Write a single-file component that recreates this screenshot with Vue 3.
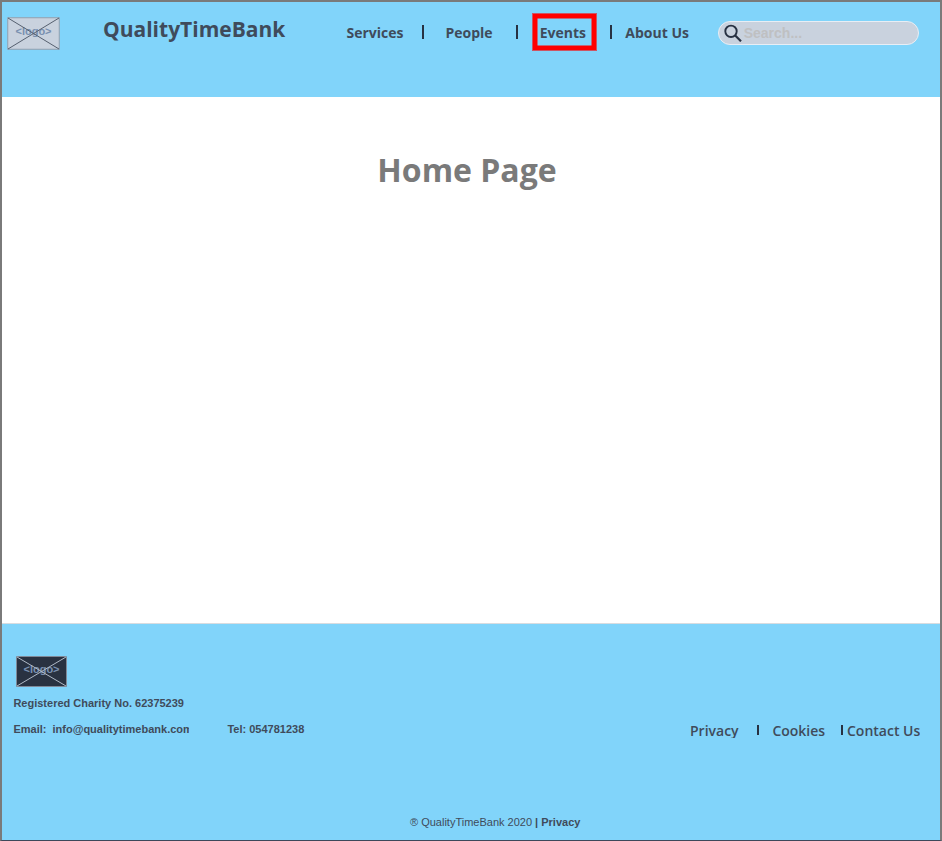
<script setup>
const navigation = [
  { label: 'Services', key: 'services' },
  { label: 'People', key: 'people' },
  { label: 'Events', key: 'events', active: true },
  { label: 'About Us', key: 'about' },
]
const footerLinks = [
  { label: 'Privacy', key: 'privacy' },
  { label: 'Cookies', key: 'cookies' },
  { label: 'Contact Us', key: 'contact' },
]
</script>

<template>
  <div class="page">
    <header class="header">
      <svg class="logo" viewBox="0 0 53 33" width="53" height="33">
        <rect x=".75" y=".75" width="51.5" height="31.5" fill="#c9d2de" stroke="#929eaf" />
        <text x="26.5" y="17.5" text-anchor="middle" class="logo-text">&lt;logo&gt;</text>
        <path d="M1 1L52 32M52 1L1 32" fill="none" stroke="#56606f" stroke-width="1" />
      </svg>
      <div class="brand">QualityTimeBank</div>
      <nav class="nav">
        <template v-for="(item, index) in navigation" :key="item.key">
          <span v-if="index" class="divider"></span>
          <a class="nav-item" :class="[item.key, { active: item.active }]">{{ item.label }}</a>
        </template>
      </nav>
      <div class="search">
        <svg class="search-icon" viewBox="0 0 18 18" width="18" height="18" fill="none" stroke="#273142">
          <circle cx="7" cy="7.3" r="5.7" stroke-width="1.9" />
          <path d="M11 11.3L17 17.3" stroke-width="2.2" />
        </svg>
        <span>Search...</span>
      </div>
    </header>

    <main class="main"><h1>Home Page</h1></main>

    <footer class="footer">
      <svg class="footer-logo" viewBox="0 0 51 31" width="51" height="31">
        <rect x=".5" y=".5" width="50" height="30" rx=".5" fill="#293241" stroke="#7f8998" />
        <text x="25.5" y="16.8" text-anchor="middle" class="logo-text">&lt;logo&gt;</text>
        <path d="M1 1L50 30M50 1L1 30" fill="none" stroke="#b0bac7" stroke-width="1" />
      </svg>
      <div class="charity">Registered Charity No. 62375239</div>
      <div class="footer-row">
        <div class="email">Email:&nbsp; info@qualitytimebank.com</div>
        <div class="phone">Tel: 054781238</div>
        <nav class="footer-nav">
          <template v-for="(item, index) in footerLinks" :key="item.key">
            <span v-if="index" class="footer-divider"></span>
            <a class="footer-link" :class="item.key">{{ item.label }}</a>
          </template>
        </nav>
      </div>
      <div class="copyright">® QualityTimeBank 2020 <b>| Privacy</b></div>
    </footer>
  </div>
</template>

<style>
body { margin: 0; background: #fff; }
</style>

<style scoped>
* { box-sizing: border-box; }
.page {
  width: 942px;
  height: 841px;
  display: flex;
  flex-direction: column;
  overflow: hidden;
  border: 2px solid #7a7a7a;
  border-bottom: 1px solid #3d485a;
  background: #fff;
  color: #3f4b5b;
  font-family: "Liberation Sans", Arial, sans-serif;
}
.header {
  height: 95px;
  display: flex;
  align-items: flex-start;
  flex: none;
  padding-left: 5px;
  background: #81d4fa;
  white-space: nowrap;
}
.logo { flex: none; margin-top: 15px; }
.logo-text { fill: #7990b0; font: bold 11px "Liberation Sans", Arial, sans-serif; }
.brand {
  width: 236px;
  flex: none;
  margin: 13px 0 0 43px;
  font: bold 21px/29px "Open Sans", sans-serif;
}
.nav {
  width: 350px;
  height: 38px;
  flex: none;
  display: flex;
  align-items: center;
  margin-top: 11px;
  font: bold 14px/20px "Open Sans", sans-serif;
}
.nav-item { flex: none; padding-top: 1px; }
.services { width: 83px; padding-left: 7.5px; }
.people { width: 92px; padding-left: 21.5px; }
.events { width: 63px; margin: 0 14px 0 15px; }
.about { padding-left: 13.3px; }
.active {
  height: 36px;
  padding: 5px 0 0 2.7px;
  border: 4px solid #f00;
  box-shadow: 0 0 0 1px rgba(255, 0, 0, .6), inset 0 0 0 .5px #f00;
}
.divider { width: 2px; height: 14px; flex: none; background: #273142; }
.search {
  width: 201px;
  height: 24px;
  flex: none;
  display: flex;
  align-items: center;
  margin: 19px 0 0 29px;
  padding-left: 5px;
  border: 1px solid #e8eef5;
  border-radius: 12px;
  background: #c9d2de;
  color: #bfc0c2;
  font: bold 14px/20px "Liberation Sans", Arial, sans-serif;
}
.search-icon { margin-right: 1.7px; }
.main { height: 526px; flex: none; padding-top: 50px; }
h1 {
  margin: 0;
  padding-right: 8px;
  text-align: center;
  color: #7a7a7a;
  font: bold 32px/46px "Open Sans", sans-serif;
}
.footer {
  height: 217px;
  flex: none;
  border-top: 1px solid #d8dce0;
  background: #81d4fa;
  padding: 32px 11px 0;
  font-size: 11px;
  line-height: 14px;
}
.footer-logo { display: block; margin-left: 3px; }
.charity { margin-top: 9px; padding-left: .4px; font-weight: bold; }
.footer-row { height: 20px; display: flex; margin-top: 12px; white-space: nowrap; }
.email { width: 176px; padding-left: .4px; overflow: hidden; font-weight: bold; }
.phone { width: 77px; margin-left: 38.4px; font-weight: bold; }
.footer-nav {
  display: flex;
  margin-left: 385.6px;
  font: 600 14px/18px "Open Sans", sans-serif;
}
.footer-link { height: 16px; overflow: hidden; }
.privacy { width: 67px; }
.cookies { width: 68.6px; margin-left: 13.4px; }
.contact { margin-left: 4px; }
.footer-divider { width: 2px; height: 10px; margin-top: 3px; background: #273142; }
.copyright { margin: 73px 0 0 397px; }
</style>
